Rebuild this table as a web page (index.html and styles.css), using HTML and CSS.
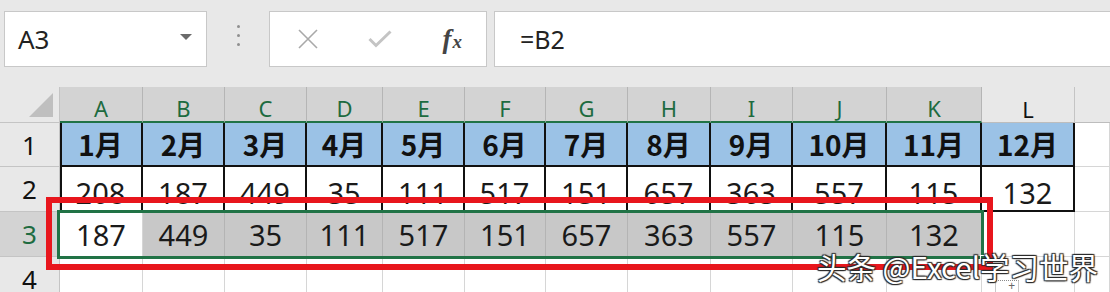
FILE: index.html
```html
<!DOCTYPE html>
<html lang="zh">
<head>
<meta charset="utf-8">
<link rel="stylesheet" href="styles.css">
</head>
<body>
<div class="app">
  <div class="toolbar">
    <div class="namebox">
      <span class="name">A3</span>
      <svg class="caret" width="12" height="6" viewBox="0 0 12 6"><path d="M0 0H12L6 6Z" fill="#6b6b6b"/></svg>
    </div>
    <div class="dots"><i></i><i></i><i></i></div>
    <div class="fbuttons">
      <svg class="ico" width="20" height="20" viewBox="0 0 20 20"><path d="M1 1L19 19M19 1L1 19" stroke="#a9a9a9" stroke-width="1.6" fill="none"/></svg>
      <svg class="ico" width="24" height="18" viewBox="0 0 24 18"><path d="M1.5 9L8 15.5L22.5 1.5" stroke="#c4c4c4" stroke-width="3" fill="none"/></svg>
      <span class="fx"><span class="f">f</span><span class="x">x</span></span>
    </div>
    <div class="formula">=B2</div>
  </div>

  <div class="sheet">
    <div class="grid">
      <div class="hd corner"><svg width="24" height="24" viewBox="0 0 24 24"><path d="M24 0V24H0Z" fill="#bfbfbf"/></svg></div>
      <div class="hd col sel">A</div><div class="hd col sel">B</div><div class="hd col sel">C</div><div class="hd col sel">D</div><div class="hd col sel">E</div><div class="hd col sel">F</div><div class="hd col sel">G</div><div class="hd col sel">H</div><div class="hd col sel">I</div><div class="hd col sel">J</div><div class="hd col sel">K</div><div class="hd col">L</div><div class="hd col end"></div>

      <div class="hd row">1</div>
      <div class="c mon first">1月</div><div class="c mon">2月</div><div class="c mon">3月</div><div class="c mon">4月</div><div class="c mon">5月</div><div class="c mon">6月</div><div class="c mon">7月</div><div class="c mon">8月</div><div class="c mon">9月</div><div class="c mon">10月</div><div class="c mon">11月</div><div class="c mon">12月</div><div class="c"></div>

      <div class="hd row">2</div>
      <div class="c val first">208</div><div class="c val">187</div><div class="c val">449</div><div class="c val">35</div><div class="c val">111</div><div class="c val">517</div><div class="c val">151</div><div class="c val">657</div><div class="c val">363</div><div class="c val">557</div><div class="c val">115</div><div class="c val">132</div><div class="c"></div>

      <div class="hd row sel">3</div>
      <div class="c num active">187</div><div class="c num pick">449</div><div class="c num pick">35</div><div class="c num pick">111</div><div class="c num pick">517</div><div class="c num pick">151</div><div class="c num pick">657</div><div class="c num pick">363</div><div class="c num pick">557</div><div class="c num pick">115</div><div class="c num pick">132</div><div class="c"></div><div class="c"></div>

      <div class="hd row">4</div>
      <div class="c"></div><div class="c"></div><div class="c"></div><div class="c"></div><div class="c"></div><div class="c"></div><div class="c"></div><div class="c"></div><div class="c"></div><div class="c"></div><div class="c"></div><div class="c"></div><div class="c"></div>
    </div>

    <div class="selection"><span class="handle"></span></div>
    <div class="redbox"></div>
    <div class="paste">+</div>
    <div class="watermark">头条 @Excel学习世界</div>
  </div>
</div>
</body>
</html>
```

FILE: styles.css
```css
* { box-sizing: border-box; }
html, body { margin: 0; padding: 0; }
body {
  width: 1110px;
  height: 292px;
  overflow: hidden;
  background: #e8e8e8;
  font-family: "Noto Sans", "Noto Sans CJK SC", sans-serif;
  color: #1a1a1a;
}
.app { display: flex; flex-direction: column; }

.toolbar {
  height: 87px;
  display: flex;
  align-items: flex-start;
  padding: 11px 0 0 4px;
  background: #e8e8e8;
}
.namebox {
  width: 203px;
  height: 56px;
  background: #fff;
  border: 1px solid #c8c8c8;
  display: flex;
  align-items: center;
  justify-content: space-between;
  padding: 0 14px 0 13px;
}
.name { font-size: 26px; color: #222; }
.caret { margin-top: -4px; }
.dots {
  width: 62px;
  height: 56px;
  display: flex;
  flex-direction: column;
  align-items: center;
  justify-content: center;
  gap: 6px;
  padding-bottom: 8px;
}
.dots i { display: block; width: 3px; height: 3px; border-radius: 50%; background: #8f8f8f; }
.fbuttons {
  width: 218px;
  height: 56px;
  background: #fff;
  border: 1px solid #c8c8c8;
  display: flex;
  align-items: center;
  padding: 0 24px 0 28px;
  justify-content: space-between;
}
.fx { font-family: "Liberation Serif", serif; font-style: italic; color: #444; display: flex; align-items: baseline; }
.fx .f { font-size: 27px; font-weight: 700; }
.fx .x { font-size: 19px; font-weight: 700; margin-left: 1px; }
.formula {
  flex: 1;
  margin-left: 7px;
  margin-right: -4px;
  height: 56px;
  background: #fff;
  border: 1px solid #c8c8c8;
  font-size: 25px;
  color: #222;
  padding-left: 25px;
  display: flex;
  align-items: center;
}

.sheet { position: relative; background: #fff; }
.grid {
  display: grid;
  grid-template-columns: 60px 83px 82px 82px 76px 82px 81px 82px 83px 82px 94px 95px 93px 1fr;
  grid-template-rows: 36px 44px 45px 45px 45px;
}
.c, .hd {
  display: flex;
  align-items: center;
  justify-content: center;
  border-right: 1px solid #d6d6d6;
  border-bottom: 1px solid #d6d6d6;
}
.hd { background: #e8e8e8; border-color: #c4c4c4; }
.corner { justify-content: flex-end; align-items: flex-end; padding: 0 6px 5px 0; }
.col { font-size: 22px; color: #111; padding-top: 8px; border-bottom: 1px solid #bdbdbd; }
.col.sel { background: #d3d3d3; color: #1d6b40; border-bottom: 2px solid #217346; border-right-color: #b5b5b5; }
.col.end { border-right: none; }
.row { font-size: 26px; color: #111; }
.row.sel { background: #d3d3d3; color: #1d6b40; }

.mon {
  background: #9bc2e6;
  font-family: "Noto Sans CJK SC", sans-serif;
  font-weight: 700;
  font-size: 28px;
  color: #111;
  border-right: 2px solid #111;
  border-bottom: 2px solid #111;
}
.val {
  font-size: 29px;
  color: #1a1a1a;
  border-right: 2px solid #111;
  border-bottom: 2px solid #111;
  padding-top: 8px;
}
.first { box-shadow: inset 2px 0 0 #111; }
.num { font-size: 29px; color: #1a1a1a; }
.active { background: #fff; }
.pick { background: #c8c8c8; border-right-color: #b4b4b4; border-bottom-color: #b4b4b4; }

.selection {
  position: absolute;
  left: 57px;
  top: 123px;
  width: 927px;
  height: 49px;
  border: 3px solid #217346;
}
.handle {
  position: absolute;
  right: -7px;
  bottom: -7px;
  width: 8px;
  height: 8px;
  background: #217346;
  border: 1px solid #fff;
}
.redbox {
  position: absolute;
  left: 46px;
  top: 110px;
  width: 947px;
  height: 73px;
  border: 6px solid #e8161d;
}
.paste {
  position: absolute;
  left: 995px;
  top: 193px;
  width: 24px;
  height: 12px;
  border-top: 1px dotted #8a8a8a;
  border-left: 1px solid #c8c8c8;
  border-right: 1px solid #c8c8c8;
  font-size: 12px;
  line-height: 10px;
  text-align: right;
  color: #666;
  padding-right: 3px;
}
.watermark {
  position: absolute;
  left: 817px;
  top: 158px;
  font-family: "Noto Sans CJK SC", sans-serif;
  font-size: 29.5px;
  color: #fff;
  white-space: nowrap;
  text-shadow: 1px 1px 1px #2a2a2a, -1px -1px 1px #2a2a2a, 1px -1px 1px #2a2a2a, -1px 1px 1px #2a2a2a;
}
```
